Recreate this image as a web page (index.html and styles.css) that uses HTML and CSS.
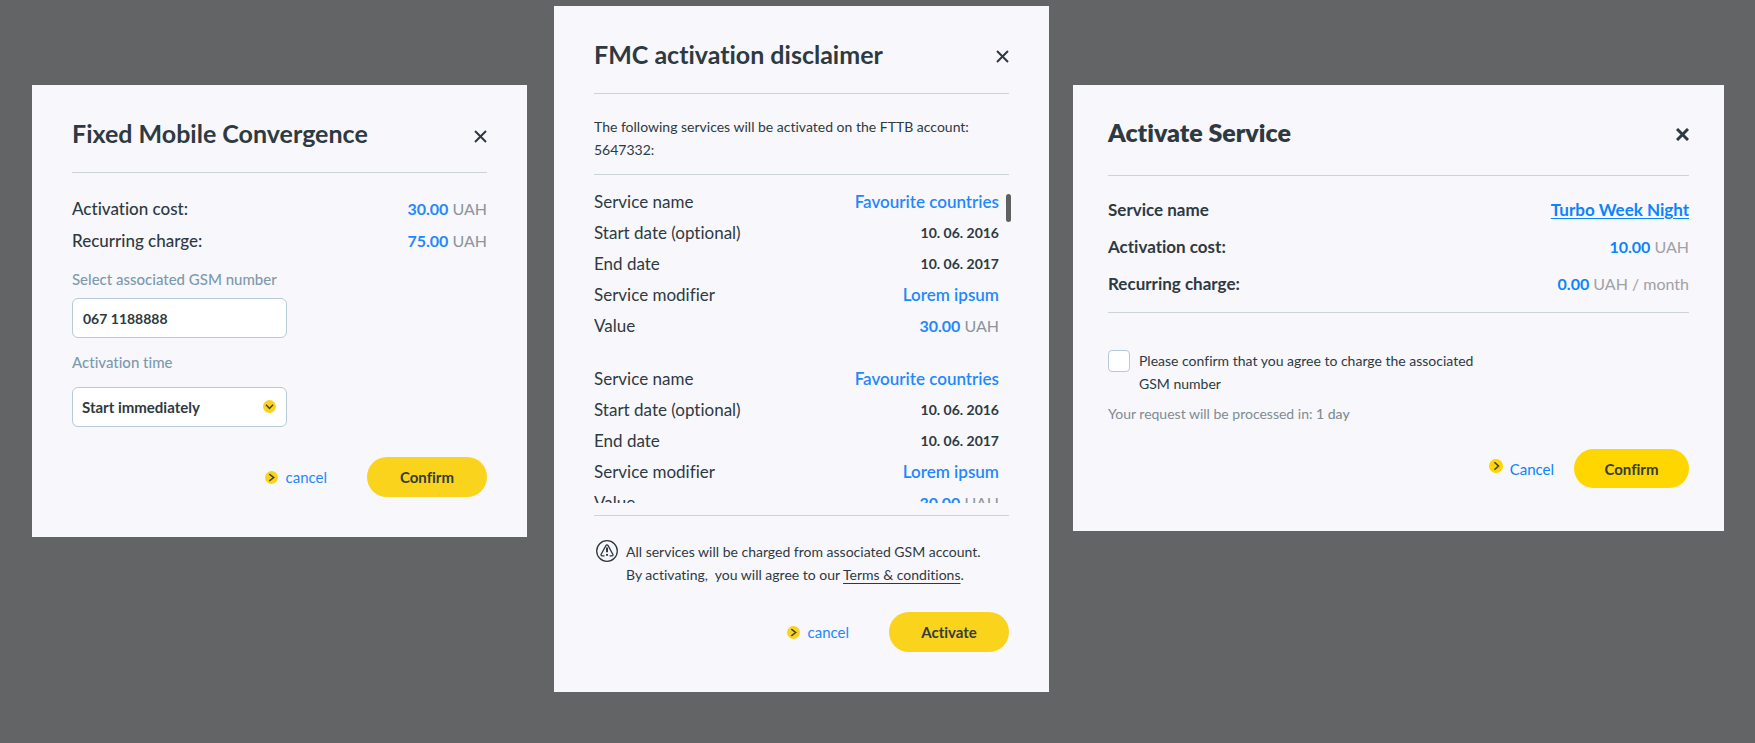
FILE: index.html
```html
<!DOCTYPE html>
<html lang="en">
<head>
<meta charset="utf-8">
<title>Service dialogs</title>
<link rel="stylesheet" href="styles.css">
</head>
<body>
<main class="board">
  <section class="dialog dialog-fmc" aria-labelledby="fmc-title">
    <header class="dialog-header">
      <h2 class="dialog-title" id="fmc-title">Fixed Mobile Convergence</h2>
      <button class="close" type="button" aria-label="Close"><svg viewBox="0 0 13 13"><path d="M1 1l11 11M12 1L1 12"/></svg></button>
    </header>
    <dl class="rows">
      <div class="row"><dt>Activation cost:</dt><dd class="amount"><b>30.00</b> UAH</dd></div>
      <div class="row"><dt>Recurring charge:</dt><dd class="amount"><b>75.00</b> UAH</dd></div>
    </dl>
    <form class="form">
      <label class="field-label" for="gsm">Select associated GSM number</label>
      <input class="field" id="gsm" type="text" value="067 1188888">
      <label class="field-label" for="time">Activation time</label>
      <div class="select-wrap">
        <select class="field" id="time"><option>Start immediately</option></select>
        <svg class="dot select-dot" viewBox="0 0 13 13"><circle cx="6.500" cy="6.500" r="6.500"/><path d="M3 4.800l3.500 3.700L10 4.800"/></svg>
      </div>
    </form>
    <footer class="actions">
      <a class="cancel" href="#"><svg class="dot" viewBox="0 0 13 13"><circle cx="6.500" cy="6.500" r="6.500"/><path d="M4.300 3.200l4.400 3.300-4.400 3.300"/></svg>cancel</a>
      <button class="primary" type="button">Confirm</button>
    </footer>
  </section>

  <section class="dialog dialog-disclaimer" aria-labelledby="disc-title">
    <header class="dialog-header">
      <h2 class="dialog-title" id="disc-title">FMC activation disclaimer</h2>
      <button class="close" type="button" aria-label="Close"><svg viewBox="0 0 13 13"><path d="M1 1l11 11M12 1L1 12"/></svg></button>
    </header>
    <p class="intro">The following services will be activated on the FTTB account: 5647332:</p>
    <div class="services">
      <div class="services-scroll" tabindex="0">
        <dl class="rows">
          <div class="row"><dt>Service name</dt><dd><b>Favourite countries</b></dd></div>
          <div class="row"><dt>Start date (optional)</dt><dd class="date">10. 06. 2016</dd></div>
          <div class="row"><dt>End date</dt><dd class="date">10. 06. 2017</dd></div>
          <div class="row"><dt>Service modifier</dt><dd><b>Lorem ipsum</b></dd></div>
          <div class="row"><dt>Value</dt><dd class="amount"><b>30.00</b> UAH</dd></div>
        </dl>
        <dl class="rows">
          <div class="row"><dt>Service name</dt><dd><b>Favourite countries</b></dd></div>
          <div class="row"><dt>Start date (optional)</dt><dd class="date">10. 06. 2016</dd></div>
          <div class="row"><dt>End date</dt><dd class="date">10. 06. 2017</dd></div>
          <div class="row"><dt>Service modifier</dt><dd><b>Lorem ipsum</b></dd></div>
          <div class="row"><dt>Value</dt><dd class="amount"><b>30.00</b> UAH</dd></div>
        </dl>
      </div>
      <span class="thumb"></span>
    </div>
    <div class="notice">
      <svg class="warning" viewBox="0 0 22 22"><circle cx="11" cy="11" r="10.300"/><path d="M8.500 15.800H6.200c-1 0-1.500-.8-1-1.600l4.700-8.600c.5-.9 1.700-.9 2.200 0l4.700 8.600c.5.800 0 1.600-1 1.600h-2.300"/><path class="warning-mark" d="M11 7.500v4.800M11 13.900v1.800"/></svg>
      <p class="notice-text">All services will be charged from associated GSM account.<br>By activating,&nbsp; you will agree to our <a class="terms" href="#">Terms &amp; conditions</a>.</p>
    </div>
    <footer class="actions">
      <a class="cancel" href="#"><svg class="dot" viewBox="0 0 13 13"><circle cx="6.500" cy="6.500" r="6.500"/><path d="M4.300 3.200l4.400 3.300-4.400 3.300"/></svg>cancel</a>
      <button class="primary" type="button">Activate</button>
    </footer>
  </section>

  <section class="dialog dialog-service" aria-labelledby="svc-title">
    <header class="dialog-header">
      <h2 class="dialog-title" id="svc-title">Activate Service</h2>
      <button class="close" type="button" aria-label="Close"><svg viewBox="0 0 13 13"><path d="M1 1l11 11M12 1L1 12"/></svg></button>
    </header>
    <dl class="rows">
      <div class="row"><dt>Service name</dt><dd><a class="service-link" href="#">Turbo Week Night</a></dd></div>
      <div class="row"><dt>Activation cost:</dt><dd class="amount"><b>10.00</b> UAH</dd></div>
      <div class="row"><dt>Recurring charge:</dt><dd class="amount"><b>0.00</b> UAH / month</dd></div>
    </dl>
    <div class="consent">
      <input class="checkbox" id="agree" type="checkbox">
      <label class="consent-text" for="agree">Please confirm that you agree to charge the associated GSM number</label>
    </div>
    <p class="processing">Your request will be processed in: <span class="duration">1 day</span></p>
    <footer class="actions">
      <a class="cancel" href="#"><svg class="dot" viewBox="0 0 13 13"><circle cx="6.500" cy="6.500" r="6.500"/><path d="M5 3l3.800 3.500L5 10"/></svg>Cancel</a>
      <button class="primary" type="button">Confirm</button>
    </footer>
  </section>
</main>
</body>
</html>
```
FILE: styles.css
```css
:root {
  --ink: #2d3a42;
  --blue: #1f88ff;
  --muted: #8b959b;
  --line: #ccd4da;
  --field-line: #b8cad5;
  --yellow: #fad31c;
}

* { box-sizing: border-box; }

body {
  margin: 0;
  min-height: 100vh;
  background: #636466;
  color: var(--ink);
  font-family: Lato, "Open Sans", sans-serif;
  font-size: 14px;
  font-variant-ligatures: no-common-ligatures;
}

h2, p, dl, dd { margin: 0; }

.board {
  display: grid;
  grid-template-columns: 498fr 495fr 651fr;
  column-gap: 24px;
  align-items: start;
  padding: 6px 31px 24px 32px;
}

.dialog {
  min-width: 0;
  padding: 32px 40px 40px;
  background: #f8f7fc;
}

.dialog-fmc { margin: 79px 3px 0 0; }
.dialog-service {
  --blue: #0a84ff;
  --muted: #a0a1a5;
  --yellow: #ffd600;
  margin-top: 79px;
  padding: 31px 35px 43px;
}

.dialog-header {
  display: flex;
  align-items: center;
  justify-content: space-between;
  padding-bottom: 23px;
  border-bottom: 1px solid var(--line);
}
.dialog-service .dialog-header { padding-bottom: 27px; }

.dialog-title {
  font-size: 25px;
  line-height: 32px;
  font-weight: 700;
}
.dialog-service .dialog-title { font-weight: 800; }

.close {
  width: 13px;
  height: 13px;
  margin-top: 6px;
  padding: 0;
  border: 0;
  background: none;
  cursor: pointer;
}
.dialog-disclaimer .close,
.dialog-service .close { margin-top: 4px; }
.close svg {
  display: block;
  fill: none;
  stroke: var(--ink);
  stroke-width: 2;
}
.dialog-service .close svg { stroke-width: 3; }

.row {
  display: flex;
  justify-content: space-between;
  font-size: 17px;
  line-height: 32px;
}
.row dt { font-weight: 500; }
.row dd { color: var(--muted); }
.row b { color: var(--blue); font-weight: 700; }
.row .amount { font-size: 16px; }
.row .date { color: var(--ink); font-size: 14px; font-weight: 700; }

.dialog-fmc .rows { margin-top: 20px; }

.form {
  display: flex;
  flex-direction: column;
  align-items: flex-start;
  margin-top: 10px;
}
.field-label {
  margin-bottom: 7px;
  color: #7c9aad;
  font-size: 15px;
  font-weight: 500;
  line-height: 24px;
}
.field {
  width: 215px;
  height: 40px;
  padding: 0 10px;
  border: 1px solid var(--field-line);
  border-radius: 6px;
  background: #fff;
  color: var(--ink);
  font: 700 14px Lato, "Open Sans", sans-serif;
  font-variant-ligatures: inherit;
  appearance: none;
}
input.field { margin-bottom: 12px; }
.select-wrap { position: relative; margin-top: 6px; }
select.field { display: block; padding: 0 9px; font-size: 15px; }
.select-dot {
  position: absolute;
  top: 13px;
  right: 11px;
  pointer-events: none;
}

.dot {
  flex: none;
  width: 13px;
  height: 13px;
  fill: none;
  stroke: #404235;
  stroke-width: 1.5;
}
.dot circle { fill: var(--yellow); stroke: none; }

.actions {
  display: flex;
  align-items: center;
  justify-content: flex-end;
  gap: 40px;
  margin-top: 30px;
}
.cancel {
  display: flex;
  align-items: center;
  gap: 8px;
  color: var(--blue);
  font-size: 15px;
  line-height: 24px;
  text-decoration: none;
}
.primary {
  width: 120px;
  height: 40px;
  padding: 0;
  border: 0;
  border-radius: 20px;
  background: var(--yellow);
  color: #343b3c;
  font: 700 15px Lato, "Open Sans", sans-serif;
  font-variant-ligatures: inherit;
  cursor: pointer;
}

.intro {
  margin-top: 21px;
  padding-bottom: 13px;
  border-bottom: 1px solid var(--line);
  line-height: 23px;
}
.services {
  position: relative;
  padding-bottom: 12px;
  border-bottom: 1px solid var(--line);
}
.services-scroll {
  height: 328px;
  padding: 11px 10px 0 0;
  overflow-y: auto;
  scrollbar-width: none;
}
.services .row { line-height: 31px; }
.services .row dt { font-weight: 400; }
.services .row b { font-weight: 600; }
.services .row .amount b { font-weight: 700; }
.services .rows + .rows { margin-top: 22px; }
.thumb {
  position: absolute;
  top: 19px;
  right: -2px;
  width: 5px;
  height: 28px;
  border-radius: 3px;
  background: #606060;
}

.notice {
  display: flex;
  gap: 8px;
  margin-top: 24px;
  padding-left: 2px;
}
.warning {
  flex: none;
  width: 22px;
  height: 22px;
  fill: none;
  stroke: var(--ink);
  stroke-width: 1.3;
}
.warning-mark { stroke-width: 2; }
.notice-text { line-height: 23px; }
.terms { color: inherit; text-underline-offset: 3px; }
.dialog-disclaimer .actions { margin-top: 26px; }

.dialog-service .rows {
  margin-top: 15px;
  padding-bottom: 10px;
  border-bottom: 1px solid var(--line);
}
.dialog-service .row { line-height: 37px; }
.dialog-service .row dt { font-weight: 700; }
.service-link { color: var(--blue); font-weight: 700; text-underline-offset: 2px; }

.consent {
  display: flex;
  gap: 9px;
  margin-top: 36px;
}
.checkbox {
  flex: none;
  width: 22px;
  height: 22px;
  margin: 1px 0 0;
  border: 1px solid var(--field-line);
  border-radius: 4px;
  background: #fff;
  appearance: none;
}
.checkbox:checked { background: var(--yellow); }
.consent-text { max-width: 360px; line-height: 23px; }
.processing { margin-top: 7px; color: #7f8c92; line-height: 24px; }
.duration { font-weight: 500; }
.dialog-service .actions { gap: 20px; margin-top: 23px; }
.dialog-service .dot { width: 14px; height: 14px; margin-bottom: 6px; }
.dialog-service .cancel { gap: 7px; }
.dialog-service .primary { width: 115px; height: 39px; }
```
